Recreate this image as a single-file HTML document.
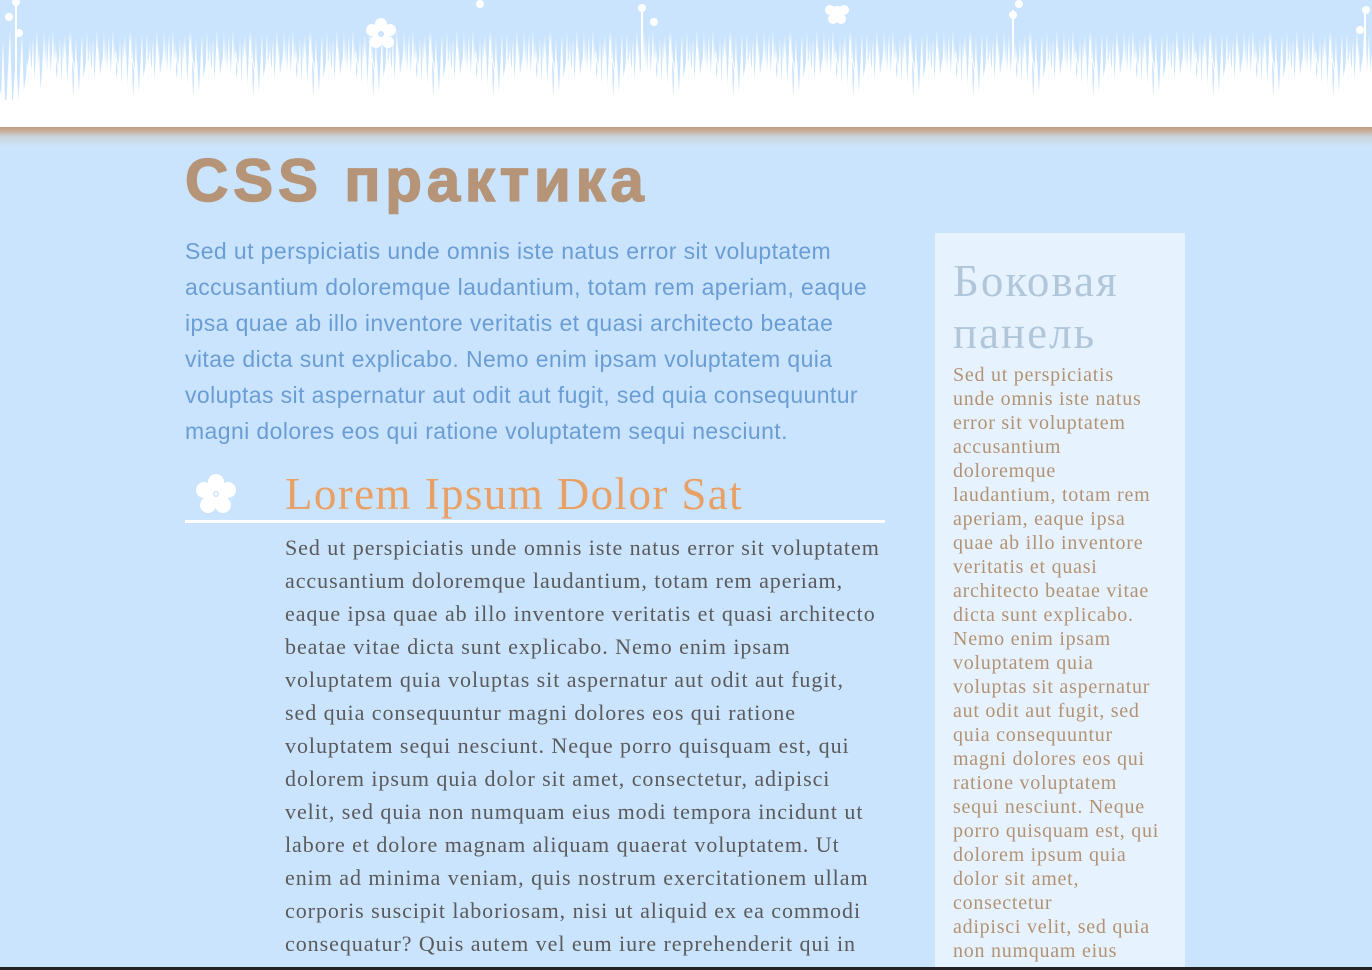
<!DOCTYPE html>
<html><head><meta charset="utf-8">
<style>
html,body{margin:0;padding:0;}
body{width:1372px;height:970px;overflow:hidden;background:#cbe4fd;position:relative;font-family:"Liberation Serif",serif;}
#hdr{position:absolute;left:0;top:0;width:1372px;height:128px;}
#rule{position:absolute;left:0;top:127px;width:1372px;height:20px;background:linear-gradient(#bf9e82 0,#c8a98f 3px,#cbd6e0 10px,#cbe4fd 20px);}
h1{position:absolute;left:185px;top:146px;margin:0;font:bold 60px/70px "Liberation Sans",sans-serif;color:#b59478;letter-spacing:4.8px;-webkit-text-stroke:1.5px #b59478;}
.intro{position:absolute;left:185px;top:233px;font:23px/36px "Liberation Sans",sans-serif;color:#6a9dd4;white-space:nowrap;letter-spacing:0.4px;}
h2{position:absolute;left:285px;top:466px;margin:0;font:normal 45px/56px "Liberation Serif",serif;color:#e8a064;white-space:nowrap;letter-spacing:1.4px;}
#line{position:absolute;left:185px;top:520px;width:700px;height:3px;background:#fff;}
.body{position:absolute;left:285px;top:531px;font-size:22px;line-height:33px;color:#5a5a5a;white-space:nowrap;letter-spacing:0.95px;}
#side{position:absolute;left:935px;top:233px;width:250px;height:737px;background:#e6f3fe;}
#side h3{position:absolute;left:18px;top:22px;margin:0;font:normal 45px/52px "Liberation Serif",serif;color:#b2c6da;letter-spacing:2px;}
#side .t{position:absolute;left:18px;top:130px;font-size:20px;line-height:24px;color:#b39274;white-space:nowrap;letter-spacing:0.75px;}
#bar{position:absolute;left:0;top:967px;width:1372px;height:3px;background:#222;}
</style></head><body>
<svg id="hdr" width="1372" height="128" viewBox="0 0 1372 128">
<defs>
<pattern id="g" width="60" height="128" patternUnits="userSpaceOnUse">
<path fill="#fff" d="M0 128 L3 40 L6 128Z M5 128 L10 30 L13 128Z M11 128 L16 55 L20 128Z M17 128 L22 35 L25 128Z M23 128 L27 60 L31 128Z M29 128 L33 38 L36 128Z M34 128 L39 50 L42 128Z M40 128 L44 32 L47 128Z M45 128 L50 58 L54 128Z M51 128 L55 42 L58 128Z M55 128 L59 65 L62 128Z M2 128 L-6 60 L8 128Z M18 128 L30 50 L26 128Z M38 128 L28 48 L42 128Z M48 128 L60 56 L56 128Z"/>
</pattern>
</defs>
<rect width="1372" height="128" fill="#cbe4fd"/>
<rect y="0" width="1372" height="128" fill="url(#g)"/>
<rect x="0" y="10" width="1372" height="128" fill="url(#g)" transform="translate(27,0)"/>
<rect x="0" y="5" width="1372" height="128" fill="url(#g)" transform="translate(43,0)"/>
<rect y="100" width="1372" height="28" fill="#fff"/>
<g fill="#fff">
<circle cx="381" cy="33" r="9"/><circle cx="372" cy="30" r="6"/><circle cx="390" cy="30" r="6"/><circle cx="376" cy="42" r="6"/><circle cx="388" cy="42" r="6"/><circle cx="381" cy="24" r="6"/>
<circle cx="837" cy="13" r="7"/><circle cx="830" cy="10" r="5"/><circle cx="844" cy="10" r="5"/><circle cx="833" cy="19" r="5"/><circle cx="841" cy="19" r="5"/>
<circle cx="9" cy="17" r="4"/><circle cx="16" cy="2" r="4"/><circle cx="19" cy="33" r="4"/>
<circle cx="480" cy="4" r="4"/><circle cx="642" cy="8" r="4"/><circle cx="654" cy="22" r="4"/><circle cx="1013" cy="15" r="4"/><circle cx="1019" cy="4" r="4"/><circle cx="1360" cy="30" r="4"/><circle cx="1366" cy="10" r="4"/>
<rect x="15" y="5" width="2" height="90"/><rect x="641" y="10" width="2" height="80"/><rect x="1012" y="10" width="2" height="80"/><rect x="1364" y="12" width="2" height="80"/>
</g>
<circle cx="381" cy="34" r="3" fill="#cbe4fd"/>
</svg>
<div id="rule"></div>
<h1>CSS практика</h1>
<div class="intro">Sed ut perspiciatis unde omnis iste natus error sit voluptatem<br>accusantium doloremque laudantium, totam rem aperiam, eaque<br>ipsa quae ab illo inventore veritatis et quasi architecto beatae<br>vitae dicta sunt explicabo. Nemo enim ipsam voluptatem quia<br>voluptas sit aspernatur aut odit aut fugit, sed quia consequuntur<br>magni dolores eos qui ratione voluptatem sequi nesciunt.</div>
<svg style="position:absolute;left:195px;top:473px" width="42" height="42" viewBox="0 0 42 42">
<g fill="#fff"><circle cx="21" cy="9" r="8"/><circle cx="33" cy="17" r="8"/><circle cx="28" cy="32" r="8"/><circle cx="13" cy="32" r="8"/><circle cx="9" cy="17" r="8"/><circle cx="21" cy="21" r="9"/></g>
<circle cx="21" cy="21" r="3" fill="#cbe4fd"/><circle cx="21" cy="21" r="1.5" fill="#fff"/>
</svg>
<h2>Lorem Ipsum Dolor Sat</h2>
<div id="line"></div>
<div class="body">Sed ut perspiciatis unde omnis iste natus error sit voluptatem<br>accusantium doloremque laudantium, totam rem aperiam,<br>eaque ipsa quae ab illo inventore veritatis et quasi architecto<br>beatae vitae dicta sunt explicabo. Nemo enim ipsam<br>voluptatem quia voluptas sit aspernatur aut odit aut fugit,<br>sed quia consequuntur magni dolores eos qui ratione<br>voluptatem sequi nesciunt. Neque porro quisquam est, qui<br>dolorem ipsum quia dolor sit amet, consectetur, adipisci<br>velit, sed quia non numquam eius modi tempora incidunt ut<br>labore et dolore magnam aliquam quaerat voluptatem. Ut<br>enim ad minima veniam, quis nostrum exercitationem ullam<br>corporis suscipit laboriosam, nisi ut aliquid ex ea commodi<br>consequatur? Quis autem vel eum iure reprehenderit qui in</div>
<div id="side">
<h3>Боковая<br>панель</h3>
<div class="t">Sed ut perspiciatis<br>unde omnis iste natus<br>error sit voluptatem<br>accusantium<br>doloremque<br>laudantium, totam rem<br>aperiam, eaque ipsa<br>quae ab illo inventore<br>veritatis et quasi<br>architecto beatae vitae<br>dicta sunt explicabo.<br>Nemo enim ipsam<br>voluptatem quia<br>voluptas sit aspernatur<br>aut odit aut fugit, sed<br>quia consequuntur<br>magni dolores eos qui<br>ratione voluptatem<br>sequi nesciunt. Neque<br>porro quisquam est, qui<br>dolorem ipsum quia<br>dolor sit amet,<br>consectetur<br>adipisci velit, sed quia<br>non numquam eius</div>
</div>
<div id="bar"></div>
</body></html>
